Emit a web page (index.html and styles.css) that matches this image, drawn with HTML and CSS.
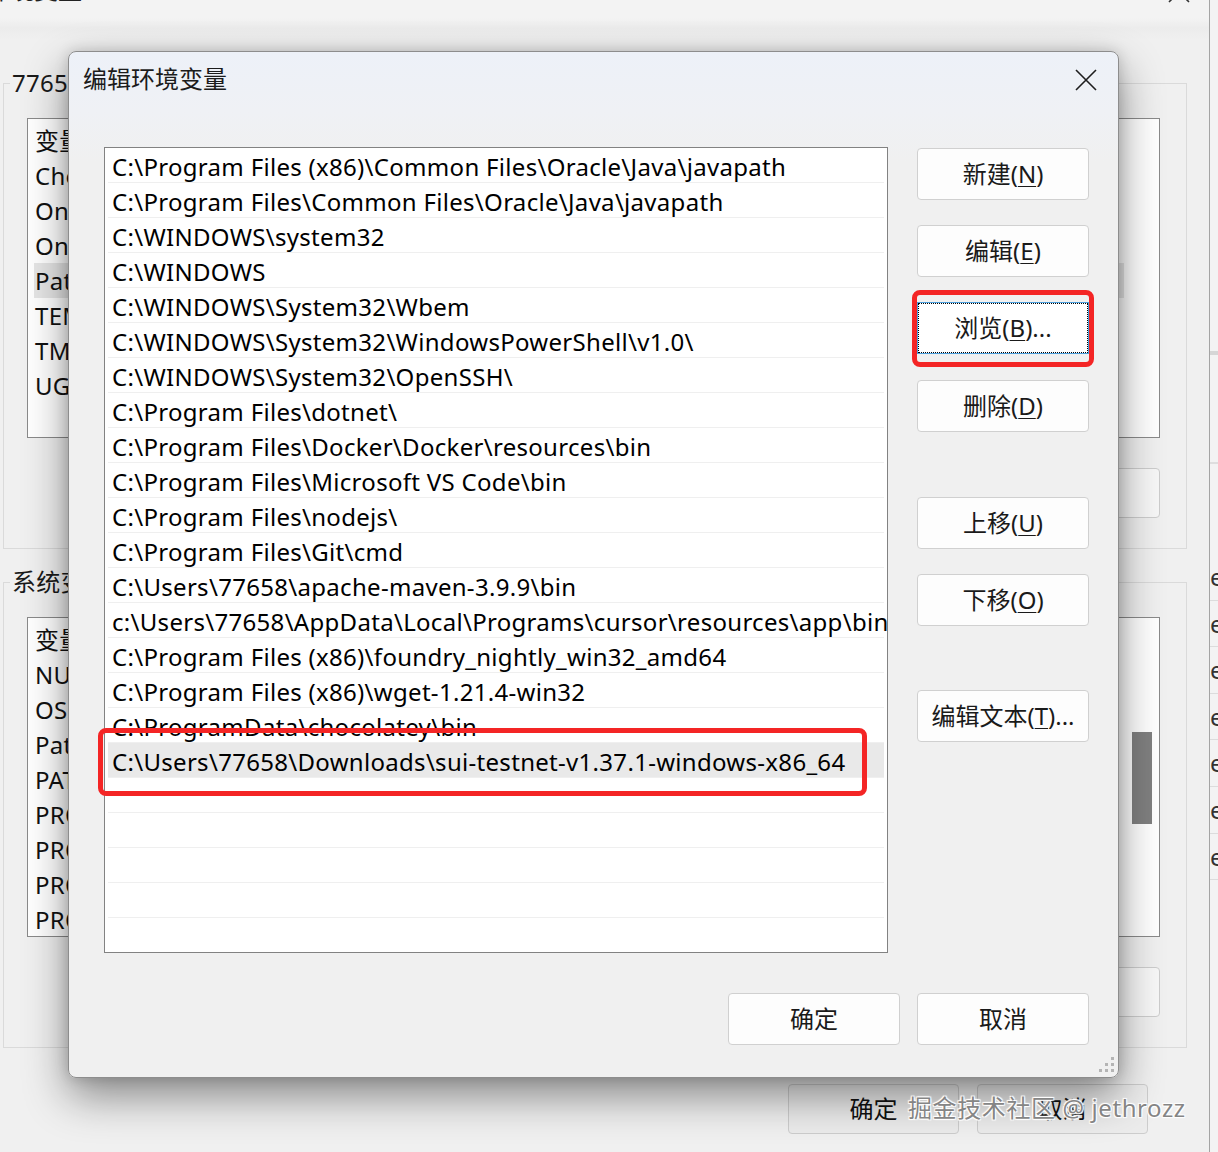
FILE: index.html
```html
<!DOCTYPE html>
<html lang="zh-CN">
<head>
<meta charset="utf-8">
<title>编辑环境变量</title>
<link rel="stylesheet" href="styles.css">
</head>
<body>
<div class="desktop">
  <div class="bgwin">
    <div class="bg-titlebar">
      <span class="bg-title">环境变量</span>
      <svg class="bg-close" width="22" height="22" viewBox="0 0 22 22"><path d="M1 1L21 21M21 1L1 21" stroke="#333" stroke-width="1.6" fill="none"/></svg>
    </div>
    <fieldset class="group">
      <legend>77658 的用户变量(U)</legend>
      <div class="bglist">
        <div class="bgrows">
          <div class="bgrow">变量</div>
          <div class="bgrow">ChocolateyInstall</div>
          <div class="bgrow">OneDrive</div>
          <div class="bgrow">OneDriveConsumer</div>
          <div class="bgrow bgsel">Path</div>
          <div class="bgrow">TEMP</div>
          <div class="bgrow">TMP</div>
          <div class="bgrow">UGII_LANG</div>
        </div>
      </div>
      <div class="bgbtns">
        <button class="bgbtn">新建(N)...</button>
        <button class="bgbtn">编辑(E)...</button>
        <button class="bgbtn">删除(D)</button>
      </div>
    </fieldset>
    <fieldset class="group group-sys">
      <legend>系统变量(S)</legend>
      <div class="bglist">
        <div class="bgrows">
          <div class="bgrow">变量</div>
          <div class="bgrow">NUMBER_OF_PROCESSORS</div>
          <div class="bgrow">OS</div>
          <div class="bgrow">Path</div>
          <div class="bgrow">PATHEXT</div>
          <div class="bgrow">PROCESSOR_ARCHITECTURE</div>
          <div class="bgrow">PROCESSOR_IDENTIFIER</div>
          <div class="bgrow">PROCESSOR_LEVEL</div>
          <div class="bgrow">PROCESSOR_REVISION</div>
        </div>
        <div class="bgscroll"><div class="bgthumb"></div></div>
      </div>
      <div class="bgbtns">
        <button class="bgbtn">新建(W)...</button>
        <button class="bgbtn">编辑(I)...</button>
        <button class="bgbtn">删除(L)</button>
      </div>
    </fieldset>
    <div class="bgfooter">
      <button class="bgbtn bgbtn-foot">确定</button>
      <button class="bgbtn bgbtn-foot">取消</button>
    </div>
  </div>

  <div class="farwin">
    <div class="far-bar1"></div>
    <div class="far-bar2"></div>
    <div class="far-rows">
      <div class="far-row">e</div>
      <div class="far-row">e</div>
      <div class="far-row">e</div>
      <div class="far-row">e</div>
      <div class="far-row">e</div>
      <div class="far-row">e</div>
      <div class="far-row">e</div>
    </div>
  </div>

  <div class="dialog">
    <div class="dlg-title">
      <span class="dlg-title-text">编辑环境变量</span>
      <svg class="dlg-close" width="22" height="22" viewBox="0 0 22 22"><path d="M1 1L21 21M21 1L1 21" stroke="#1e1e1e" stroke-width="1.6" fill="none"/></svg>
    </div>
    <div class="dlg-body">
      <div class="pathlist">
        <div class="prow">C:\Program Files (x86)\Common Files\Oracle\Java\javapath</div>
        <div class="prow">C:\Program Files\Common Files\Oracle\Java\javapath</div>
        <div class="prow">C:\WINDOWS\system32</div>
        <div class="prow">C:\WINDOWS</div>
        <div class="prow">C:\WINDOWS\System32\Wbem</div>
        <div class="prow">C:\WINDOWS\System32\WindowsPowerShell\v1.0\</div>
        <div class="prow">C:\WINDOWS\System32\OpenSSH\</div>
        <div class="prow">C:\Program Files\dotnet\</div>
        <div class="prow">C:\Program Files\Docker\Docker\resources\bin</div>
        <div class="prow">C:\Program Files\Microsoft VS Code\bin</div>
        <div class="prow">C:\Program Files\nodejs\</div>
        <div class="prow">C:\Program Files\Git\cmd</div>
        <div class="prow">C:\Users\77658\apache-maven-3.9.9\bin</div>
        <div class="prow">c:\Users\77658\AppData\Local\Programs\cursor\resources\app\bin</div>
        <div class="prow">C:\Program Files (x86)\foundry_nightly_win32_amd64</div>
        <div class="prow">C:\Program Files (x86)\wget-1.21.4-win32</div>
        <div class="prow">C:\ProgramData\chocolatey\bin</div>
        <div class="prow psel">C:\Users\77658\Downloads\sui-testnet-v1.37.1-windows-x86_64</div>
        <div class="prow"></div>
        <div class="prow"></div>
        <div class="prow"></div>
        <div class="prow"></div>
        <div class="prow plast"></div>
      </div>
      <div class="btncol">
        <button class="btn">新建(<u>N</u>)</button>
        <button class="btn gap">编辑(<u>E</u>)</button>
        <button class="btn gap btn-focus">浏览(<u>B</u>)...</button>
        <button class="btn gap1">删除(<u>D</u>)</button>
        <button class="btn gap-lg">上移(<u>U</u>)</button>
        <button class="btn gap">下移(<u>O</u>)</button>
        <button class="btn gap-lg2">编辑文本(<u>T</u>)...</button>
      </div>
    </div>
    <div class="dlg-foot">
      <button class="btn">确定</button>
      <button class="btn">取消</button>
    </div>
    <svg class="grip" width="18" height="17" viewBox="0 0 18 17">
      <rect x="14" y="1" width="3" height="3" fill="#b4b4b4"/>
      <rect x="8" y="7" width="3" height="3" fill="#b4b4b4"/>
      <rect x="14" y="7" width="3" height="3" fill="#b4b4b4"/>
      <rect x="2" y="13" width="3" height="3" fill="#b4b4b4"/>
      <rect x="8" y="13" width="3" height="3" fill="#b4b4b4"/>
      <rect x="14" y="13" width="3" height="3" fill="#b4b4b4"/>
    </svg>
  </div>

  <div class="mark mark-btn"></div>
  <div class="mark mark-row"></div>
  <div class="watermark">掘金技术社区 @ jethrozz</div>
</div>
</body>
</html>
```

FILE: styles.css
```css
* { box-sizing: border-box; }

html, body {
  margin: 0;
  padding: 0;
  background: #f0f0f0;
}

body {
  font-family: "Noto Sans", "Noto Sans CJK SC", sans-serif;
  color: #000;
}

button {
  font-family: inherit;
}

.desktop {
  position: relative;
  width: 1218px;
  height: 1152px;
  overflow: hidden;
  display: flex;
  background: #f0f0f0;
}

/* ---------- background window ---------- */
.bgwin {
  width: 1210px;
  flex: none;
  border-right: 1px solid #a4a4a4;
  background: #f0f0f0;
}

.bg-titlebar {
  height: 66px;
  display: flex;
  align-items: flex-start;
  background: linear-gradient(#f3f3f3 0, #f3f3f3 18px, #ececec 28px, #f0f0f0 40px);
}

.bg-title {
  font-size: 24px;
  line-height: 30px;
  margin-top: -25px;
  margin-left: -14px;
  color: #222;
}

.bg-close {
  margin-left: auto;
  margin-top: -19px;
  margin-right: 19px;
}

.group {
  margin: 0 22px 0 3px;
  padding: 0 26px 30px 23px;
  border: 1px solid #dadada;
  min-width: 0;
}

.group legend {
  font-size: 24px;
  line-height: 34px;
  padding: 0 2px;
  margin-left: -17px;
  color: #1a1a1a;
  white-space: nowrap;
  letter-spacing: 0.3px;
}

.group-sys {
  margin-top: 16px;
}

.bglist {
  margin-top: 18px;
  height: 320px;
  border: 1px solid #8a8a8a;
  background: #fff;
  padding: 4px 6px;
  display: flex;
}

.bgrows {
  flex: 1;
}

.bgrow {
  height: 35px;
  line-height: 35px;
  font-size: 24px;
  padding-left: 1px;
  white-space: nowrap;
  color: #111;
  letter-spacing: 0.3px;
}

.bgsel {
  background: #e6e6e6;
  width: 1090px;
}

.bgscroll {
  width: 20px;
  margin-right: 1px;
  padding-top: 110px;
}

.bgthumb {
  height: 92px;
  background: #808080;
}

.bgbtns {
  display: flex;
  justify-content: flex-end;
  gap: 18px;
  margin-top: 30px;
}

.bgbtn {
  width: 172px;
  height: 50px;
  border: 1px solid #cdcdcd;
  border-radius: 4px;
  background: #f7f7f7;
  font-size: 24px;
  color: #111;
  padding: 0 0 3px;
}

.bgfooter {
  display: flex;
  justify-content: flex-end;
  gap: 18px;
  margin-top: 36px;
  padding-right: 61px;
}

.bgbtn-foot {
  width: 171px;
  background: #ececec;
}

/* ---------- window at far right ---------- */
.farwin {
  flex: 1;
  background: #f3f3f3;
  overflow: hidden;
}

.far-bar1 {
  margin-top: 351px;
  height: 4px;
  background: #d6d6d6;
}

.far-bar2 {
  margin-top: 107px;
  height: 2px;
  background: #dedede;
}

.far-rows {
  margin-top: 90px;
}

.far-row {
  height: 46.6px;
  line-height: 46px;
  font-size: 24px;
  color: #333;
  border-bottom: 1px solid #dcdcdc;
  padding-left: 0;
}

/* ---------- dialog ---------- */
.dialog {
  position: absolute;
  left: 68px;
  top: 51px;
  width: 1051px;
  height: 1027px;
  border: 1px solid #8d8d8d;
  border-radius: 8px;
  background: linear-gradient(#edf1f8 0, #eff1f5 60px, #f0f0f0 110px);
  box-shadow: 0 18px 44px rgba(0, 0, 0, 0.44), 0 0 14px rgba(0, 0, 0, 0.16);
  display: flex;
  flex-direction: column;
}

.dlg-title {
  height: 56px;
  display: flex;
  align-items: center;
  padding: 0 21px 5px 14px;
}

.dlg-title-text {
  font-size: 24px;
  color: #1c1c1c;
}

.dlg-close {
  margin-left: auto;
  margin-top: 4px;
}

.dlg-body {
  display: flex;
  gap: 29px;
  padding: 39px 29px 0 35px;
}

.pathlist {
  width: 784px;
  height: 806px;
  border: 1px solid #828282;
  background: #fff;
  padding: 0 3px;
  overflow: hidden;
}

.prow {
  height: 35px;
  border-bottom: 1px solid #efefef;
  padding: 3px 0 0 4px;
  font-size: 24px;
  line-height: 32px;
  white-space: nowrap;
  color: #000;
  letter-spacing: 0.3px;
}

.psel {
  background: #e9e9e9;
}

.plast {
  border-bottom: none;
}

.btncol {
  width: 172px;
  display: flex;
  flex-direction: column;
  padding-top: 1px;
}

.btn {
  width: 172px;
  height: 52px;
  border: 1px solid #d0d0d0;
  border-radius: 4px;
  background: #fdfdfd;
  font-size: 24px;
  color: #1a1a1a;
  padding: 0 0 4px;
  flex: none;
}

.btn u {
  text-underline-offset: 3px;
  text-decoration-thickness: 1px;
}

.gap { margin-top: 25px; }
.gap1 { margin-top: 26px; }
.gap-lg { margin-top: 65px; }
.gap-lg2 { margin-top: 64px; }

.btn-focus {
  border-radius: 0;
  border-color: #4c9fdc;
  background: #fff;
  outline: 1px dotted #000;
  outline-offset: -2px;
}

.dlg-foot {
  display: flex;
  justify-content: flex-end;
  gap: 17px;
  padding: 40px 29px 0 0;
}

.grip {
  position: absolute;
  right: 3px;
  bottom: 4px;
}

/* ---------- annotations ---------- */
.mark {
  position: absolute;
  border: 5px solid #f42525;
  border-radius: 8px;
}

.mark-btn {
  left: 912px;
  top: 290px;
  width: 182px;
  height: 77px;
}

.mark-row {
  left: 98px;
  top: 728px;
  width: 769px;
  height: 68px;
}

.watermark {
  position: absolute;
  left: 908px;
  top: 1091px;
  font-size: 24px;
  line-height: 34px;
  color: #858585;
  white-space: nowrap;
  letter-spacing: 0.6px;
  text-shadow: 0 0 1px #fff, 1px 1px 1px #fff, -1px -1px 1px #fff, 1px -1px 1px #fff, -1px 1px 1px #fff;
}
```
